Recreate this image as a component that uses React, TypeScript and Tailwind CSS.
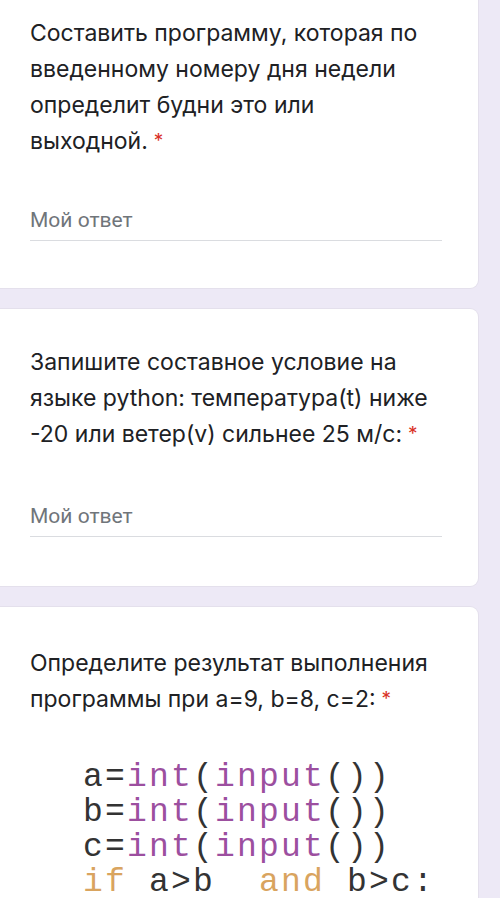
const Star = () => <span className="text-[#d93025] text-[19px] align-top ml-[6px]">*</span>

const Answer = (props: { gap: string }) => (
  <div className={props.gap}>
    <div className="font-['Roboto',sans-serif] text-[21px] leading-[30px] text-[#70757a] pb-[5px] border-b border-[#dadce0]">
      Мой ответ
    </div>
  </div>
)

const Card = (props: { children: React.ReactNode; className?: string }) => (
  <div className={"bg-white ml-[-10px] w-[488px] rounded-lg shadow-[0_0_0_1px_#e4e0ec] pl-[40px] pr-[36px] " + (props.className || "")}>
    {props.children}
  </div>
)

const Title = (props: { children: React.ReactNode }) => (
  <div className="font-['Inter',sans-serif] text-[#202124] text-[23px] leading-[36px]">
    {props.children}
  </div>
)

export default function App() {
  return (
    <div className="w-[500px] h-[898px] overflow-hidden bg-[#ede9f6]">
      <div className="flex flex-col gap-[21px]">
        <Card className="mt-[-21px] pt-[36px] pb-[47px]">
          <Title>
            Составить программу, которая по введенному номеру дня недели определит будни это или выходной.<Star />
          </Title>
          <Answer gap="mt-[46px]" />
        </Card>
        <Card className="pt-[35px] pb-[49px]">
          <Title>
            Запишите составное условие на языке python: температура(t) ниже -20 или ветер(v) сильнее 25 м/с:<Star />
          </Title>
          <Answer gap="mt-[49px]" />
        </Card>
        <Card className="pt-[38px] pb-[40px]">
          <Title>
            Определите результат выполнения программы при a=9, b=8, c=2:<Star />
          </Title>
          <div className="mt-[43px] ml-[53px] font-['Liberation_Mono',monospace] text-[33px] tracking-[2.2px] leading-[35px] text-[#333333] whitespace-pre">
            <div>a=<span className="text-[#9c4f9f]">int</span>(<span className="text-[#9c4f9f]">input</span>())</div>
            <div>b=<span className="text-[#9c4f9f]">int</span>(<span className="text-[#9c4f9f]">input</span>())</div>
            <div>c=<span className="text-[#9c4f9f]">int</span>(<span className="text-[#9c4f9f]">input</span>())</div>
            <div><span className="text-[#d9a45f]">if</span> a&gt;b  <span className="text-[#d9a45f]">and</span> b&gt;c:</div>
          </div>
        </Card>
      </div>
    </div>
  )
}
